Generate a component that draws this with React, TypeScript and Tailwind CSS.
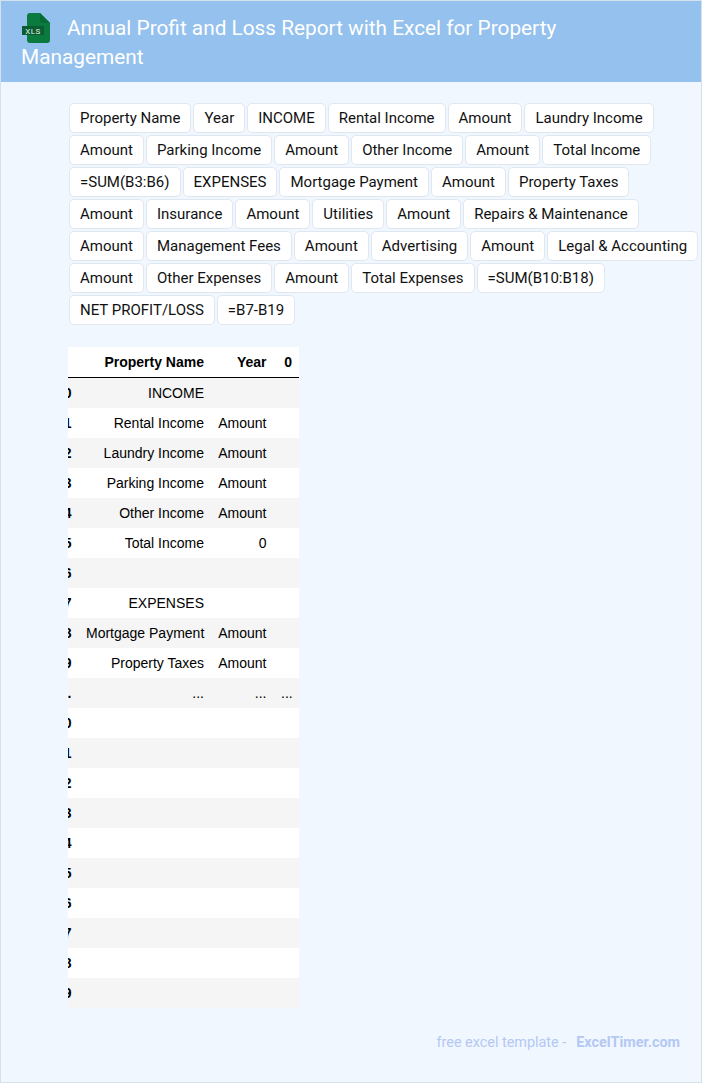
const CHIPS = [
  'Property Name', 'Year', 'INCOME', 'Rental Income', 'Amount', 'Laundry Income',
  'Amount', 'Parking Income', 'Amount', 'Other Income', 'Amount', 'Total Income',
  '=SUM(B3:B6)', 'EXPENSES', 'Mortgage Payment', 'Amount', 'Property Taxes',
  'Amount', 'Insurance', 'Amount', 'Utilities', 'Amount', 'Repairs & Maintenance',
  'Amount', 'Management Fees', 'Amount', 'Advertising', 'Amount', 'Legal & Accounting',
  'Amount', 'Other Expenses', 'Amount', 'Total Expenses', '=SUM(B10:B18)',
  'NET PROFIT/LOSS', '=B7-B19',
];

const ROWS: [string, string, string, string][] = [
  ['0', 'INCOME', '', ''],
  ['1', 'Rental Income', 'Amount', ''],
  ['2', 'Laundry Income', 'Amount', ''],
  ['3', 'Parking Income', 'Amount', ''],
  ['4', 'Other Income', 'Amount', ''],
  ['5', 'Total Income', '0', ''],
  ['6', '', '', ''],
  ['7', 'EXPENSES', '', ''],
  ['8', 'Mortgage Payment', 'Amount', ''],
  ['9', 'Property Taxes', 'Amount', ''],
  ['...', '...', '...', '...'],
  ['20', '', '', ''],
  ['21', '', '', ''],
  ['22', '', '', ''],
  ['23', '', '', ''],
  ['24', '', '', ''],
  ['25', '', '', ''],
  ['26', '', '', ''],
  ['27', '', '', ''],
  ['28', '', '', ''],
  ['29', '', '', ''],
];

function XlsIcon() {
  return (
    <svg viewBox="0 0 30 30" className="absolute left-[1px] top-[-1px] h-[30px] w-[30px]">
      <path d="M8 0h10l10 10v17a3 3 0 0 1-3 3H8a3 3 0 0 1-3-3V3a3 3 0 0 1 3-3z" fill="#0a7a3f" />
      <path d="M18 0l10 10h-7a3 3 0 0 1-3-3z" fill="#086a36" />
      <rect x="0" y="13" width="22" height="9" fill="#0a5c31" />
      <text x="11" y="20.5" textAnchor="middle" fontSize="8" letterSpacing="0.5" fill="#e3f1e8" fontFamily="Roboto, sans-serif">
        XLS
      </text>
    </svg>
  );
}

export default function App() {
  return (
    <div className="flex min-h-[1083px] flex-col border border-[#d5e2ee] bg-[#f1f7ff] font-['Roboto',sans-serif]">
      {/* header */}
      <div className="bg-[#94c1ed] pb-[10px] pl-[20px] pr-[120px] pt-[13px] text-[20.8px] leading-[29px] text-white">
        <span className="relative mr-[46px] inline-block h-[20px] w-0 align-top">
          <XlsIcon />
        </span>
        Annual Profit and Loss Report with Excel for Property Management
      </div>

      {/* chips */}
      <div className="mt-[21px] flex w-full flex-wrap gap-[2px] pl-[68px]">
        {CHIPS.map((c, i) => (
          <span
            key={i}
            className="h-[30px] rounded-[5px] border border-[#dfe7f1] bg-white px-[10px] text-[15px] leading-[28px] text-[#111]"
          >
            {c}
          </span>
        ))}
      </div>

      {/* table, row index column is cut off on the left */}
      <div className="ml-[67px] mt-[22px] w-[231px] overflow-hidden">
        <table className="-ml-[19px] w-[250px] table-fixed border-separate border-spacing-0 font-['Liberation_Sans',Arial,sans-serif] text-[14px] text-black">
          <colgroup>
            <col className="w-[30px]" />
            <col className="w-[132px]" />
            <col className="w-[63px]" />
            <col className="w-[25px]" />
          </colgroup>
          <thead>
            <tr className="h-[31px] bg-white font-bold">
              <th className="border-b border-black px-[7px]"></th>
              <th className="whitespace-nowrap border-b border-black px-[7px] text-right">Property Name</th>
              <th className="border-b border-black pl-[7px] pr-[7.5px] text-right">Year</th>
              <th className="border-b border-black px-[7px] text-right">0</th>
            </tr>
          </thead>
          <tbody>
            {ROWS.map((r, i) => (
              <tr key={i} className={i % 2 === 0 ? 'h-[30px] bg-[#f5f5f5]' : 'h-[30px] bg-white'}>
                <th className="whitespace-nowrap pl-[7px] pr-[7.5px] text-right font-bold">{r[0]}</th>
                <td className="whitespace-nowrap px-[7px] text-right">{r[1]}</td>
                <td className="whitespace-nowrap pl-[7px] pr-[7.5px] text-right">{r[2]}</td>
                <td className="whitespace-nowrap px-[7px] text-right">{r[3]}</td>
              </tr>
            ))}
          </tbody>
        </table>
      </div>

      {/* footer */}
      <div className="mt-[25px] flex justify-end pr-[21px] text-[14.4px] leading-[20px] text-[#b4c8f4]">
        <span>free excel template -</span>
        <span className="ml-[10px] font-bold">ExcelTimer.com</span>
      </div>
    </div>
  );
}
